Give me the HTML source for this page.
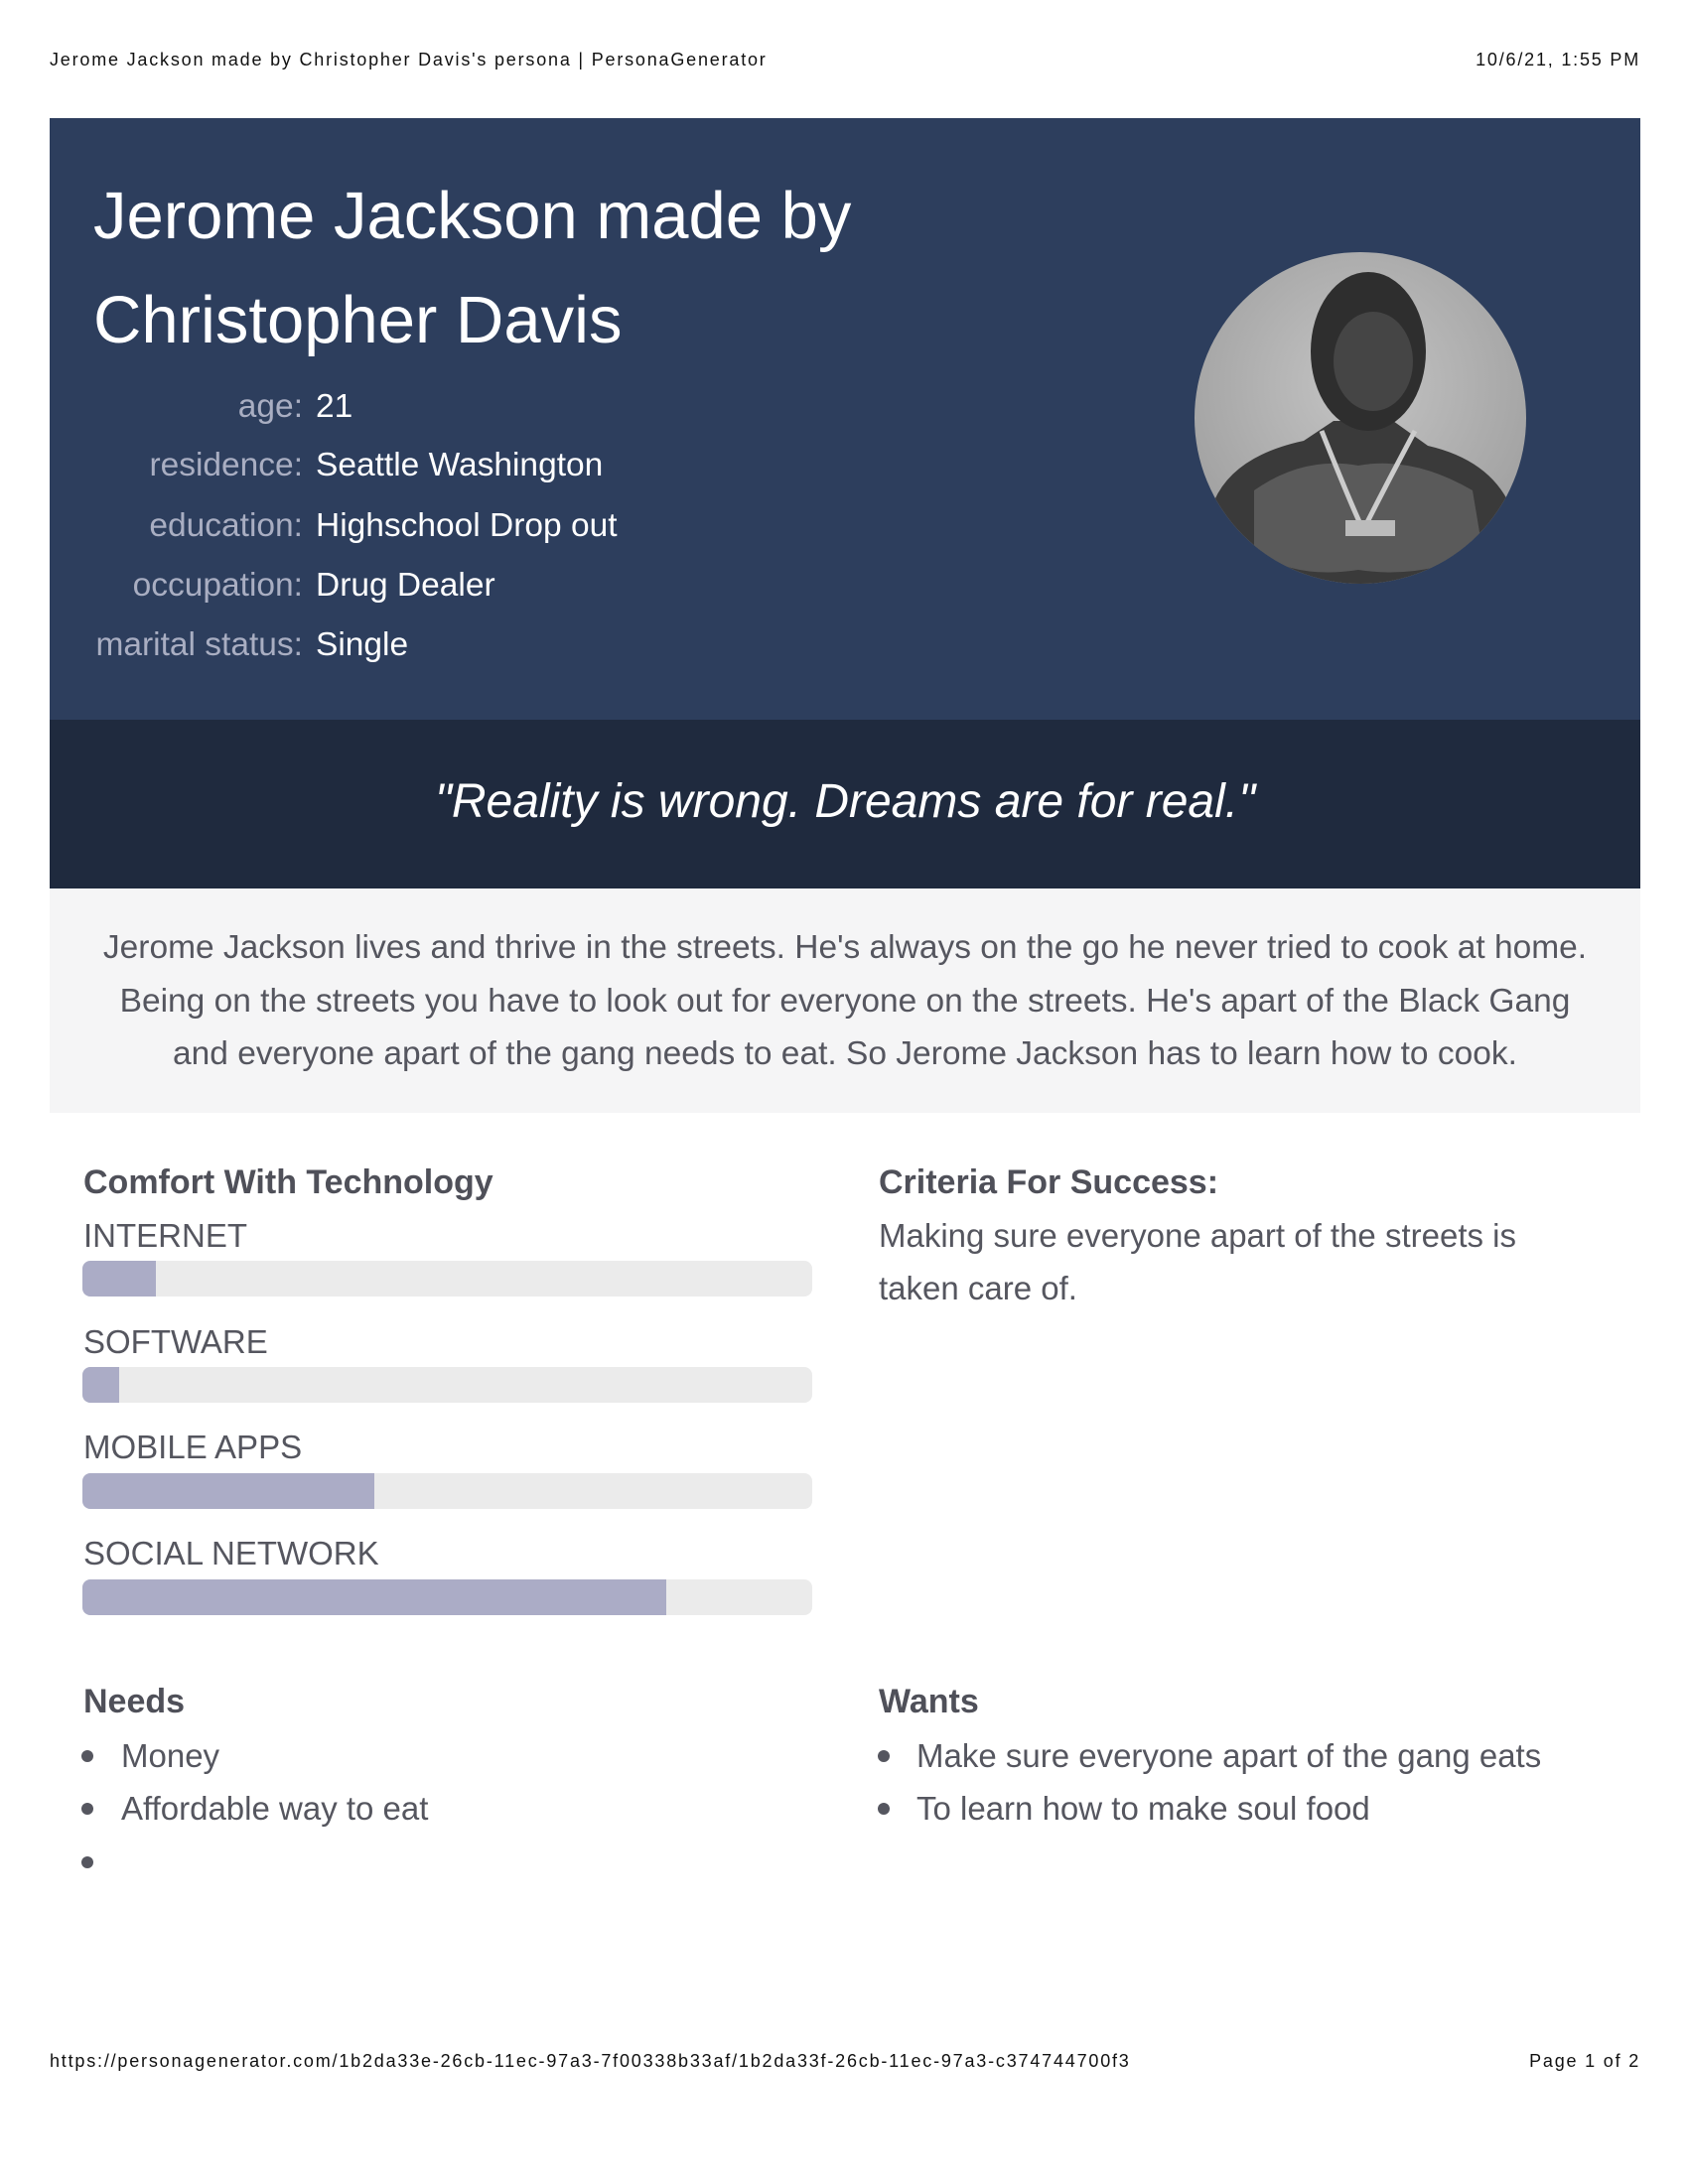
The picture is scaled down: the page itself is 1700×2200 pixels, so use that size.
<!DOCTYPE html>
<html><head><meta charset="utf-8"><style>
*{margin:0;padding:0;box-sizing:border-box}
body{width:1700px;height:2200px;background:#fff;position:relative;font-family:"Liberation Sans",sans-serif;overflow:hidden}
.a{position:absolute;white-space:nowrap}
.sm{font-size:18px;color:#111;line-height:24px;letter-spacing:1.8px}
.hdr{left:50px;top:119px;width:1602px;height:606px;background:#2d3e5d}
.qt{left:50px;top:725px;width:1602px;height:170px;background:#1f2a3e}
.ds{left:50px;top:895px;width:1602px;height:226px;background:#f5f5f6}
.title{left:94px;color:#fff;font-size:67px;line-height:80px}
.lab{color:#a9aec2;font-size:33.5px;line-height:40px;right:1395px;text-align:right}
.val{color:#fff;font-size:33.5px;line-height:40px;left:318px}
.g{color:#55565f}
.h{font-weight:bold;font-size:34px;line-height:40px;color:#4f5059}
.t{font-size:33px;line-height:40px}
.track{left:83px;width:735px;height:36px;background:#ebebeb;border-radius:8px;overflow:hidden}
.fill{height:36px;background:#abacc6}
.dot{width:12px;height:12px;border-radius:50%;background:#55565f}
</style></head><body>
<div class="a sm" style="left:50px;top:48px">Jerome Jackson made by Christopher Davis's persona | PersonaGenerator</div>
<div class="a sm" style="right:48px;top:48px">10/6/21, 1:55 PM</div>

<div class="a hdr"></div>
<div class="a title" style="top:178px">Jerome Jackson made by</div>
<div class="a title" style="top:283px">Christopher Davis</div>
<div class="a lab" style="top:390px">age:</div><div class="a val" style="top:390px">21</div>
<div class="a lab" style="top:449px">residence:</div><div class="a val" style="top:449px">Seattle Washington</div>
<div class="a lab" style="top:510px">education:</div><div class="a val" style="top:510px">Highschool Drop out</div>
<div class="a lab" style="top:570px">occupation:</div><div class="a val" style="top:570px">Drug Dealer</div>
<div class="a lab" style="top:630px">marital status:</div><div class="a val" style="top:630px">Single</div>

<svg class="a" style="left:1203px;top:254px" width="334" height="334" viewBox="0 0 334 334">
<defs><clipPath id="c"><circle cx="167" cy="167" r="167"/></clipPath>
<radialGradient id="bg" cx="0.5" cy="0.4" r="0.7"><stop offset="0" stop-color="#c4c4c4"/><stop offset="1" stop-color="#9a9a9a"/></radialGradient></defs>
<g clip-path="url(#c)">
<rect width="334" height="334" fill="url(#bg)"/>
<path d="M20 250 Q40 205 110 190 L140 170 L200 170 L235 195 Q300 210 320 260 L334 334 L0 334 Z" fill="#3a3a3a"/>
<path d="M60 240 Q110 205 165 215 Q220 205 280 240 L290 300 Q230 330 165 320 Q100 330 60 300 Z" fill="#5a5a5a"/>
<ellipse cx="175" cy="100" rx="58" ry="80" fill="#2e2e2e"/>
<ellipse cx="180" cy="110" rx="40" ry="50" fill="#454545"/>
<path d="M128 180 Q160 260 170 280 Q190 240 222 180" fill="none" stroke="#ccc" stroke-width="5"/>
<rect x="152" y="270" width="50" height="16" fill="#bbb"/>
</g></svg>

<div class="a qt"></div>
<div class="a" style="left:50px;width:1602px;top:778px;text-align:center;color:#fff;font-size:48px;line-height:60px;font-style:italic">"Reality is wrong. Dreams are for real."</div>

<div class="a ds"></div>
<div class="a g" style="left:50px;width:1602px;top:928px;text-align:center;font-size:33.5px;line-height:53.5px;white-space:normal">Jerome Jackson lives and thrive in the streets. He's always on the go he never tried to cook at home.<br>Being on the streets you have to look out for everyone on the streets. He's apart of the Black Gang<br>and everyone apart of the gang needs to eat. So Jerome Jackson has to learn how to cook.</div>

<div class="a h" style="left:84px;top:1171px">Comfort With Technology</div>
<div class="a g t" style="left:84px;top:1225px">INTERNET</div>
<div class="a track" style="top:1270px"><div class="fill" style="width:74px"></div></div>
<div class="a g t" style="left:84px;top:1332px">SOFTWARE</div>
<div class="a track" style="top:1377px"><div class="fill" style="width:37px"></div></div>
<div class="a g t" style="left:84px;top:1438px">MOBILE APPS</div>
<div class="a track" style="top:1484px"><div class="fill" style="width:294px"></div></div>
<div class="a g t" style="left:84px;top:1545px">SOCIAL NETWORK</div>
<div class="a track" style="top:1591px"><div class="fill" style="width:588px"></div></div>

<div class="a h" style="left:885px;top:1171px">Criteria For Success:</div>
<div class="a g t" style="left:885px;top:1225px">Making sure everyone apart of the streets is</div>
<div class="a g t" style="left:885px;top:1278px">taken care of.</div>

<div class="a h" style="left:84px;top:1694px">Needs</div>
<div class="a dot" style="left:82px;top:1763px"></div><div class="a g t" style="left:122px;top:1749px">Money</div>
<div class="a dot" style="left:82px;top:1816px"></div><div class="a g t" style="left:122px;top:1802px">Affordable way to eat</div>
<div class="a dot" style="left:82px;top:1870px"></div>

<div class="a h" style="left:885px;top:1694px">Wants</div>
<div class="a dot" style="left:884px;top:1763px"></div><div class="a g t" style="left:923px;top:1749px">Make sure everyone apart of the gang eats</div>
<div class="a dot" style="left:884px;top:1816px"></div><div class="a g t" style="left:923px;top:1802px">To learn how to make soul food</div>

<div class="a sm" style="left:50px;top:2064px">https://personagenerator.com/1b2da33e-26cb-11ec-97a3-7f00338b33af/1b2da33f-26cb-11ec-97a3-c374744700f3</div>
<div class="a sm" style="right:48px;top:2064px">Page 1 of 2</div>
</body></html>
